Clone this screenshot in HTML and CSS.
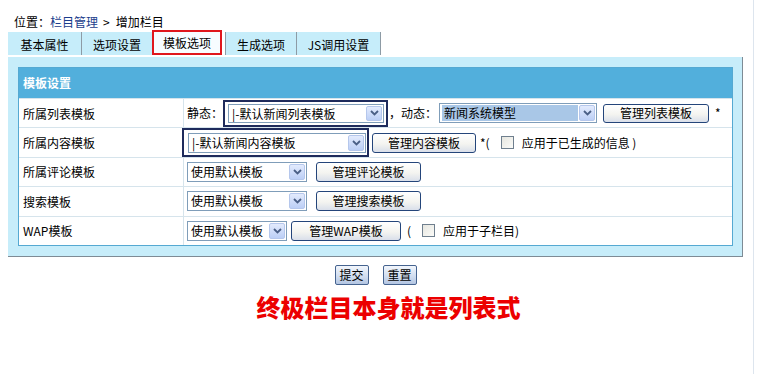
FILE: index.html
```html
<!DOCTYPE html>
<html lang="zh-CN">
<head>
<meta charset="utf-8">
<title>增加栏目</title>
<link rel="stylesheet" href="styles.css">
</head>
<body>
<div class="frame">
  <div class="crumb">位置：<span class="crumb-link">栏目管理</span><span class="sep">&gt;</span>增加栏目</div>

  <ul class="tabs">
    <li class="tab t1">基本属性</li>
    <li class="tab t2">选项设置</li>
    <li class="tab active">模板选项</li>
    <li class="tab t4">生成选项</li>
    <li class="tab t5">JS调用设置</li>
  </ul>

  <div class="panel">
    <div class="grid">
      <div class="head">模板设置</div>

      <div class="row">
        <div class="label">所属列表模板</div>
        <div class="field">
          <span class="txt">静态：</span>
          <span class="focus focus-list">
            <span class="select s-list"><span class="sel-text">|-默认新闻列表模板</span><span class="arrow"><svg width="9" height="6" viewBox="0 0 9 6"><path d="M1 1 L4.5 4.5 L8 1" fill="none" stroke="#4a5f86" stroke-width="1.8"/></svg></span></span>
          </span>
          <span class="txt dyn">，动态：</span>
          <span class="select s-model"><span class="sel-text hl">新闻系统模型</span><span class="arrow"><svg width="9" height="6" viewBox="0 0 9 6"><path d="M1 1 L4.5 4.5 L8 1" fill="none" stroke="#4a5f86" stroke-width="1.8"/></svg></span></span>
          <button class="btn b-list" type="button">管理列表模板</button>
          <span class="txt star">*</span>
        </div>
      </div>

      <div class="row">
        <div class="label">所属内容模板</div>
        <div class="field">
          <span class="focus focus-content">
            <span class="select s-content"><span class="sel-text">|-默认新闻内容模板</span><span class="arrow"><svg width="9" height="6" viewBox="0 0 9 6"><path d="M1 1 L4.5 4.5 L8 1" fill="none" stroke="#4a5f86" stroke-width="1.8"/></svg></span></span>
          </span>
          <button class="btn b-content" type="button">管理内容模板</button>
          <span class="txt paren">*(</span>
          <input class="check" type="checkbox">
          <span class="txt">应用于已生成的信息 )</span>
        </div>
      </div>

      <div class="row">
        <div class="label">所属评论模板</div>
        <div class="field">
          <span class="select s-def"><span class="sel-text">使用默认模板</span><span class="arrow"><svg width="9" height="6" viewBox="0 0 9 6"><path d="M1 1 L4.5 4.5 L8 1" fill="none" stroke="#4a5f86" stroke-width="1.8"/></svg></span></span>
          <button class="btn b-def" type="button">管理评论模板</button>
        </div>
      </div>

      <div class="row">
        <div class="label">搜索模板</div>
        <div class="field">
          <span class="select s-def"><span class="sel-text">使用默认模板</span><span class="arrow"><svg width="9" height="6" viewBox="0 0 9 6"><path d="M1 1 L4.5 4.5 L8 1" fill="none" stroke="#4a5f86" stroke-width="1.8"/></svg></span></span>
          <button class="btn b-def" type="button">管理搜索模板</button>
        </div>
      </div>

      <div class="row">
        <div class="label">WAP模板</div>
        <div class="field">
          <span class="select s-wap"><span class="sel-text">使用默认模板</span><span class="arrow"><svg width="9" height="6" viewBox="0 0 9 6"><path d="M1 1 L4.5 4.5 L8 1" fill="none" stroke="#4a5f86" stroke-width="1.8"/></svg></span></span>
          <button class="btn b-wap" type="button">管理WAP模板</button>
          <span class="txt paren2">(</span>
          <input class="check" type="checkbox">
          <span class="txt">应用于子栏目)</span>
        </div>
      </div>
    </div>
  </div>

  <div class="actions">
    <button class="sbtn" type="button">提交</button>
    <button class="sbtn" type="button">重置</button>
  </div>

  <div class="note">终极栏目本身就是列表式</div>
</div>
</body>
</html>
```

FILE: styles.css
```css
* { box-sizing: border-box; }

html, body {
  margin: 0;
  padding: 0;
  background: #fff;
}

body {
  font-family: "Noto Sans CJK SC", "Liberation Sans", sans-serif;
  font-size: 12px;
  color: #000;
}

.frame {
  width: 754px;
  height: 374px;
  border-right: 1px solid #dde5ee;
  overflow: hidden;
}

/* breadcrumb */
.crumb {
  margin-top: 14px;
  padding-left: 14px;
  height: 16px;
  line-height: 16px;
  white-space: nowrap;
}
.crumb-link { color: #1b3d8c; }
.sep { margin: 0 6px 0 5px; }

/* tabs */
.tabs {
  list-style: none;
  margin: 1px 0 0 8px;
  padding: 0;
  display: flex;
  align-items: flex-end;
  height: 24px;
}
.tab {
  height: 23px;
  padding-top: 3px;
  line-height: 20px;
  text-align: center;
  background: #c6edfa;
  border-right: 1px solid #8d9ba5;
  white-space: nowrap;
}
.t1 { width: 74px; }
.t2 { width: 70px; border-right: none; }
.active {
  width: 70px;
  height: 25px;
  padding-top: 1px;
  background: #f7fcff;
  border: 2px solid #e0161c;
  line-height: 19px;
}
.t4 { width: 72px; margin-left: 3px; border-left: 1px solid #8d9ba5; }
.t5 { width: 84px; }

/* panel */
.panel {
  margin: 2px 0 0 8px;
  width: 735px;
  padding: 10px 9px 10px 10px;
  background: #c7edfa;
  border-right: 1px solid #7e8b95;
  border-bottom: 1px solid #7e8b95;
}
.grid {
  border: 1px solid #55a9d2;
  background: #fff;
}
.head {
  height: 30px;
  line-height: 30px;
  padding-left: 4px;
  background: #52afdc;
  color: #fff;
  font-weight: bold;
}
.row {
  display: flex;
  height: 29.4px;
  border-top: 1px solid #d6e4ec;
}
.label {
  width: 165px;
  flex: none;
  padding-left: 4px;
  display: flex;
  align-items: center;
  border-right: 1px solid #d6e4ec;
}
.field {
  flex: 1;
  display: flex;
  align-items: center;
  padding-left: 3px;
  white-space: nowrap;
}
.txt { line-height: 16px; }

/* selects */
.focus {
  display: inline-flex;
  border: 2px solid #1e2b5c;
}
.focus-list { padding: 2px 2px 2px 3px; }
.focus-content {
  padding: 3px 1px 2px 4px;
  margin-left: -5px;
}

.select {
  display: inline-flex;
  align-items: stretch;
  height: 20px;
  border: 1px solid #7f9db9;
  background: #fff;
}
.focus-list .select { height: 19px; }
.sel-text {
  flex: 1;
  padding-left: 3px;
  line-height: 18px;
  overflow: hidden;
}
.sel-text.hl {
  background: #a9c7e7;
  margin: 1px 0 1px 2px;
  padding-left: 2px;
  line-height: 16px;
}
.arrow {
  width: 16px;
  flex: none;
  margin: 1px;
  border: 1px solid #b5c7ec;
  border-radius: 2px;
  background: linear-gradient(#e3ebfd, #bccff6);
  display: flex;
  align-items: center;
  justify-content: center;
}
.s-list { width: 156px; }
.s-model { width: 158px; margin-left: 2px; }
.s-content { width: 178px; }
.s-def { width: 120px; }
.s-wap { width: 100px; }

/* buttons */
.btn {
  height: 19px;
  padding: 0;
  font-family: inherit;
  font-size: 12px;
  line-height: 16px;
  color: #000;
  border: 1px solid #24457a;
  border-radius: 3px;
  background: linear-gradient(#ffffff, #f4f4f0 55%, #d9dfea);
}
.b-list { width: 106px; margin-left: 6px; }
.b-content { width: 104px; margin-left: 3px; height: 20px; }
.b-def { width: 105px; margin-left: 9px; height: 20px; }
.b-wap { width: 110px; margin-left: 4px; height: 20px; }

.dyn { margin-left: 1px; }
.star { margin-left: 6px; }
.paren { margin-left: 4px; }
.paren2 { margin-left: 6px; }

.check {
  appearance: none;
  -webkit-appearance: none;
  width: 13px;
  height: 13px;
  margin: 0 8px 0 11px;
  border: 1px solid #6f7f8e;
  background: linear-gradient(135deg, #e6e6e0, #fbfbf8);
}

/* bottom */
.actions {
  margin: 8px 0 0 8px;
  width: 735px;
  display: flex;
  justify-content: center;
  gap: 14px;
}
.sbtn {
  width: 34px;
  height: 20px;
  padding: 0;
  font-family: inherit;
  font-size: 12px;
  line-height: 16px;
  color: #000;
  border: 1px solid #45638f;
  border-radius: 2px;
  background: linear-gradient(#f2f6fc, #cfdcef 60%, #b3c5e2);
}

.note {
  margin: 7px 0 0 8px;
  width: 735px;
  padding-left: 26px;
  text-align: center;
  font-size: 24px;
  line-height: 30px;
  font-weight: 900;
  color: #ec0000;
  letter-spacing: 0;
}
```
